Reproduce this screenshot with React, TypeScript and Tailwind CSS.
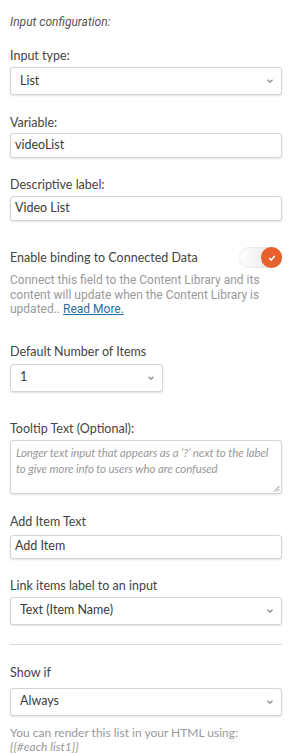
import React from 'react';

// Side-panel form for configuring a "List" input.

const LABEL = "font-['Lato',sans-serif] text-[12.5px] text-[#444]";
const BOX =
  "rounded-[3px] border border-[#d4d4d4] bg-white shadow-[0_1px_2px_rgba(0,0,0,0.12)] font-['Lato',sans-serif] text-[12.5px] text-[#3a3a3a]";

function Chevron() {
  return (
    <svg width="8" height="6" viewBox="0 0 8 6" className="text-[#888]">
      <path d="M1.5 1.8 L4 4.2 L6.5 1.8" fill="none" stroke="currentColor" strokeWidth="1.3" />
    </svg>
  );
}

function Select({ value, className = '' }: { value: string; className?: string }) {
  return (
    <div className={`${BOX} flex h-[28px] items-center justify-between pr-[7px] pl-[9px] ${className}`}>
      <span>{value}</span>
      <Chevron />
    </div>
  );
}

function TextInput({ value, h = 'h-[25px]' }: { value: string; h?: string }) {
  return (
    <div className={`${BOX} flex ${h} items-center px-[4px]`}>
      <span>{value}</span>
    </div>
  );
}

function Toggle() {
  return (
    <div className="flex h-[21px] w-[43px] items-center justify-end rounded-full bg-gradient-to-r from-white to-[#e2e2e2] shadow-[inset_0_0_2px_rgba(0,0,0,0.15)]">
      <div className="flex h-[21px] w-[21px] items-center justify-center rounded-full bg-[#e8602c]">
        <svg width="10" height="10" viewBox="0 0 10 10">
          <path d="M2.3 5.2 L4.2 7 L7.8 3" fill="none" stroke="white" strokeWidth="1.6" />
        </svg>
      </div>
    </div>
  );
}

export default function App() {
  return (
    <div className="min-h-[753px] w-[301px] bg-white pt-[15px] pl-[10px]">
      <div className="w-[272px]">
        <p className="font-['Roboto',sans-serif] text-[12px] leading-[15px] text-[#555] italic">Input configuration:</p>

        <p className={`${LABEL} mt-[18px] leading-[15px]`}>Input type:</p>
        <Select value="List" className="mt-[4px]" />

        <p className={`${LABEL} mt-[20px] leading-[15px]`}>Variable:</p>
        <div className="mt-[3px]">
          <TextInput value="videoList" />
        </div>

        <p className={`${LABEL} mt-[19px] leading-[15px]`}>Descriptive label:</p>
        <div className="mt-[4px]">
          <TextInput value="Video List" />
        </div>

        <div className="mt-[26px] flex items-center justify-between">
          <p className={`${LABEL} leading-[15px]`}>Enable binding to Connected Data</p>
          <Toggle />
        </div>
        <p className="mt-[5px] font-['Roboto',sans-serif] text-[12px] leading-[14.5px] text-[#9a9a9a]">
          <span>
            Connect this field to the Content Library and its content will update when the Content Library is
            updated..{' '}
          </span>
          <span className="text-[#2a6e9e] underline">Read More.</span>
        </p>

        <p className={`${LABEL} mt-[27px] leading-[15px]`}>Default Number of Items</p>
        <Select value="1" className="mt-[5px] w-[153px]" />

        <p className={`${LABEL} mt-[29px] leading-[15px]`}>Tooltip Text (Optional):</p>
        <div className={`${BOX} relative mt-[4px] h-[54px] px-[5px] pt-[4px]`}>
          <p className="text-[11.5px] leading-[16px] tracking-[-0.1px] text-[#999] italic">
            Longer text input that appears as a ‘?’ next to the label to give more info to users who are confused
          </p>
          <svg width="7" height="7" viewBox="0 0 7 7" className="absolute right-[1px] bottom-[1px]">
            <path d="M6.5 1 L1 6.5 M6.5 4 L4 6.5" stroke="#777" strokeWidth="0.9" />
          </svg>
        </div>

        <p className={`${LABEL} mt-[20px] leading-[15px]`}>Add Item Text</p>
        <div className="mt-[6px]">
          <TextInput value="Add Item" h="h-[24px]" />
        </div>

        <p className={`${LABEL} mt-[19px] leading-[15px]`}>Link items label to an input</p>
        <Select value="Text (Item Name)" className="mt-[4px]" />

        <hr className="mt-[19px] border-t border-[#dcdcdc]" />

        <p className={`${LABEL} mt-[20px] leading-[15px]`}>Show if</p>
        <Select value="Always" className="mt-[8px] h-[26px]" />

        <p className="mt-[10px] font-['Lato',sans-serif] text-[12px] leading-[14px] text-[#999]">
          You can render this list in your HTML using:
          <br />
          <span className="italic">{'{{#each list1}}'}</span>
        </p>
      </div>
    </div>
  );
}
